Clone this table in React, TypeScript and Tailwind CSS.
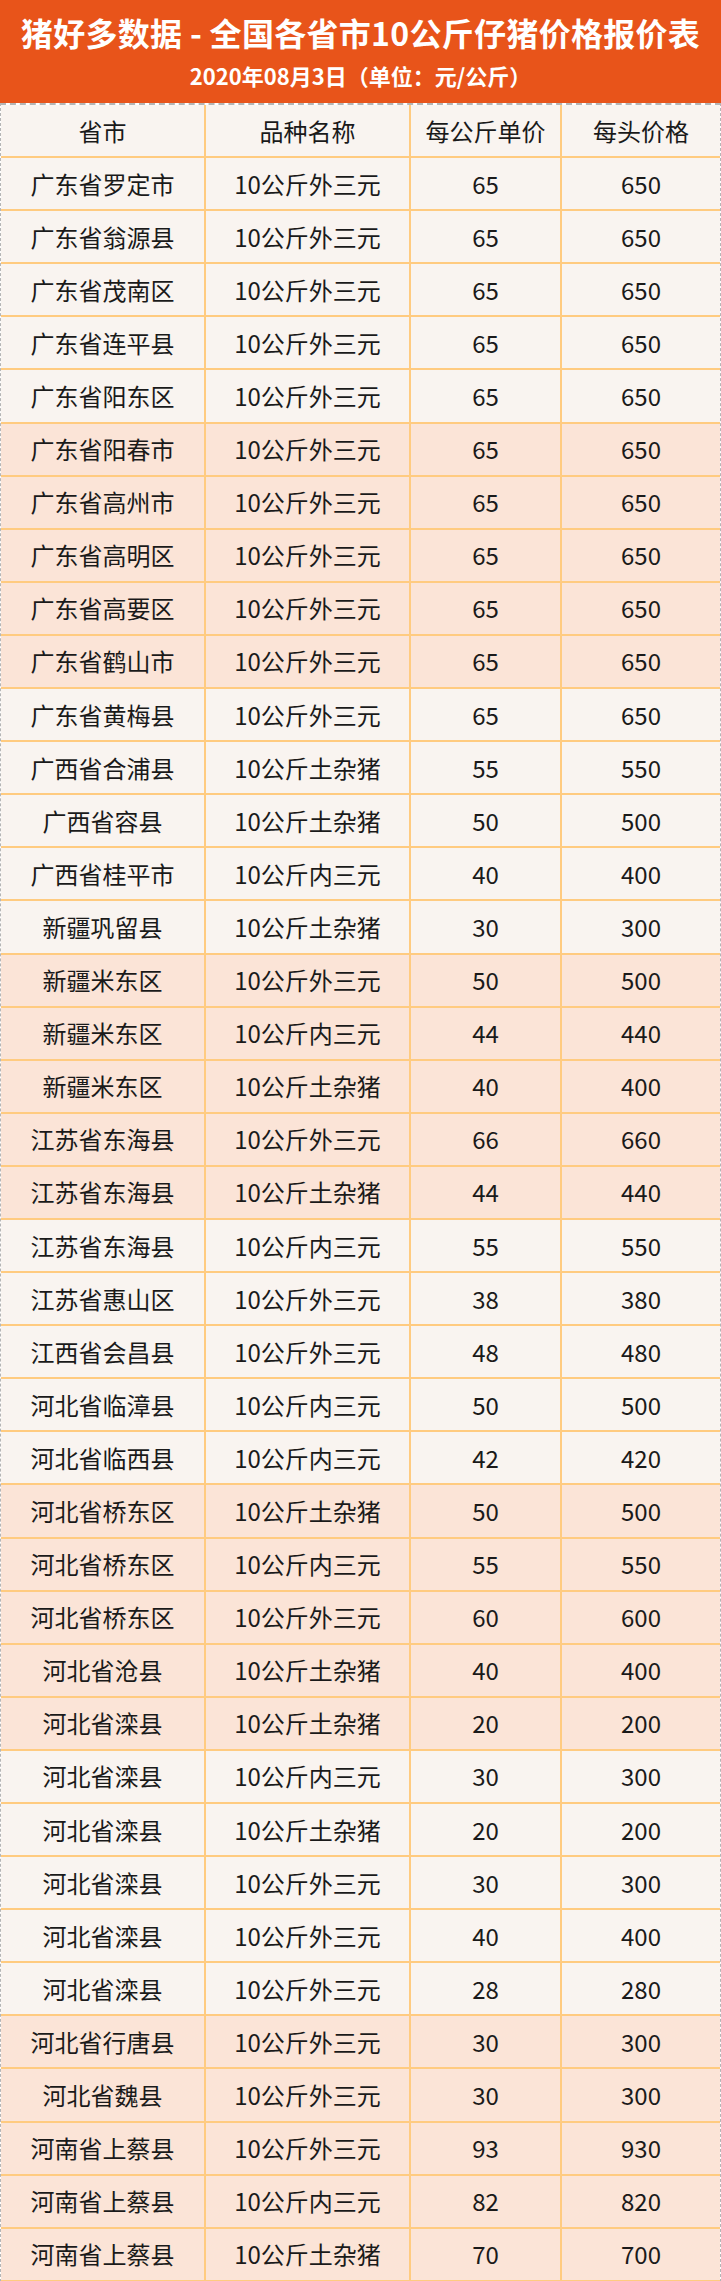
import React from "react";

type Row = [string, string, number, number];

const rows: Row[] = [
  ["广东省罗定市", "10公斤外三元", 65, 650],
  ["广东省翁源县", "10公斤外三元", 65, 650],
  ["广东省茂南区", "10公斤外三元", 65, 650],
  ["广东省连平县", "10公斤外三元", 65, 650],
  ["广东省阳东区", "10公斤外三元", 65, 650],
  ["广东省阳春市", "10公斤外三元", 65, 650],
  ["广东省高州市", "10公斤外三元", 65, 650],
  ["广东省高明区", "10公斤外三元", 65, 650],
  ["广东省高要区", "10公斤外三元", 65, 650],
  ["广东省鹤山市", "10公斤外三元", 65, 650],
  ["广东省黄梅县", "10公斤外三元", 65, 650],
  ["广西省合浦县", "10公斤土杂猪", 55, 550],
  ["广西省容县", "10公斤土杂猪", 50, 500],
  ["广西省桂平市", "10公斤内三元", 40, 400],
  ["新疆巩留县", "10公斤土杂猪", 30, 300],
  ["新疆米东区", "10公斤外三元", 50, 500],
  ["新疆米东区", "10公斤内三元", 44, 440],
  ["新疆米东区", "10公斤土杂猪", 40, 400],
  ["江苏省东海县", "10公斤外三元", 66, 660],
  ["江苏省东海县", "10公斤土杂猪", 44, 440],
  ["江苏省东海县", "10公斤内三元", 55, 550],
  ["江苏省惠山区", "10公斤外三元", 38, 380],
  ["江西省会昌县", "10公斤外三元", 48, 480],
  ["河北省临漳县", "10公斤内三元", 50, 500],
  ["河北省临西县", "10公斤内三元", 42, 420],
  ["河北省桥东区", "10公斤土杂猪", 50, 500],
  ["河北省桥东区", "10公斤内三元", 55, 550],
  ["河北省桥东区", "10公斤外三元", 60, 600],
  ["河北省沧县", "10公斤土杂猪", 40, 400],
  ["河北省滦县", "10公斤土杂猪", 20, 200],
  ["河北省滦县", "10公斤内三元", 30, 300],
  ["河北省滦县", "10公斤土杂猪", 20, 200],
  ["河北省滦县", "10公斤外三元", 30, 300],
  ["河北省滦县", "10公斤外三元", 40, 400],
  ["河北省滦县", "10公斤外三元", 28, 280],
  ["河北省行唐县", "10公斤外三元", 30, 300],
  ["河北省魏县", "10公斤外三元", 30, 300],
  ["河南省上蔡县", "10公斤外三元", 93, 930],
  ["河南省上蔡县", "10公斤内三元", 82, 820],
  ["河南省上蔡县", "10公斤土杂猪", 70, 700],
];

const font = { fontFamily: '"Noto Sans CJK SC", "Noto Sans", sans-serif' };

function Cell({ children, last }: { children: React.ReactNode; last?: boolean }) {
  return (
    <div
      className={`flex items-center justify-center ${
        last ? "" : "border-r-2 border-[#FFCB80]"
      }`}
    >
      {children}
    </div>
  );
}

function TableRow({ cells, peach }: { cells: React.ReactNode[]; peach?: boolean }) {
  return (
    <div
      className={`grid grid-cols-[205px_205px_151px_1fr] h-[53.1px] border-b-2 border-[#FFCB80] ${
        peach ? "bg-[#FBE4D7]" : "bg-[#F9F4F0]"
      }`}
    >
      {cells.map((c, i) => (
        <Cell key={i} last={i === cells.length - 1}>
          {c}
        </Cell>
      ))}
    </div>
  );
}

export default function App() {
  return (
    <div className="w-[721px] text-[#1a1a1a]" style={font}>
      {/* Title */}
      <div className="h-[103px] bg-[#E8541A] flex flex-col items-center text-white font-bold">
        <div className="text-[32px] leading-none mt-[16px] tracking-[0.3px]">
          猪好多数据 - 全国各省市10公斤仔猪价格报价表
        </div>
        <div className="text-[22px] leading-none mt-[16px]">
          2020年08月3日（单位：元/公斤）
        </div>
      </div>

      {/* Table */}
      <div className="border-x border-t-2 border-dashed border-[#b5b5b5] text-[24px] leading-none">
        <TableRow cells={["省市", "品种名称", "每公斤单价", "每头价格"]} />
        {rows.map((r, i) => (
          <TableRow
            key={i}
            peach={Math.floor(i / 5) % 2 === 1}
            cells={[r[0], r[1], r[2], r[3]]}
          />
        ))}
      </div>
    </div>
  );
}
